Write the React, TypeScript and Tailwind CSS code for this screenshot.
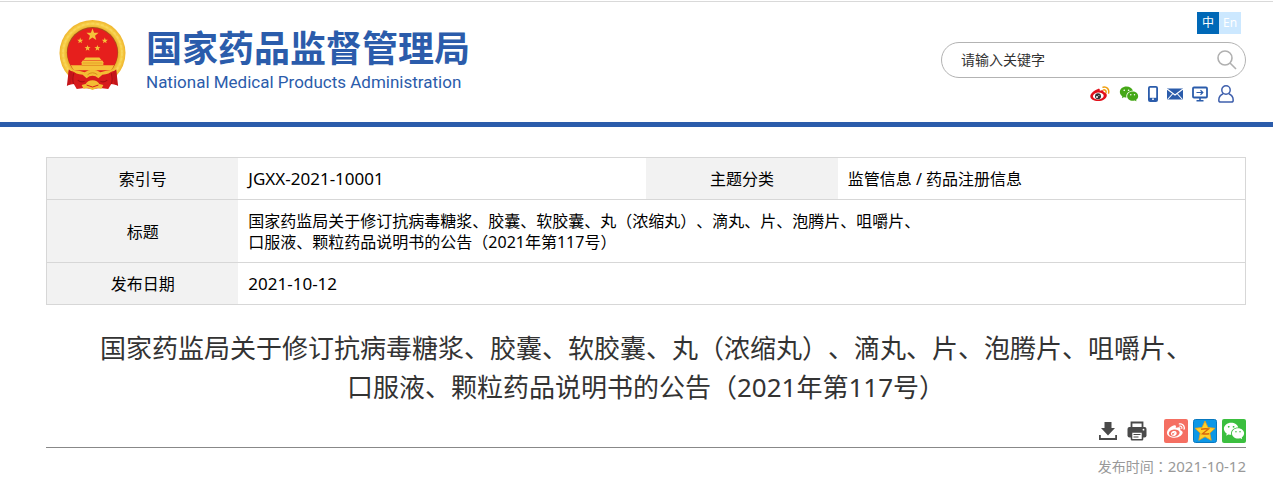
import { FormEvent, useState } from 'react'
import { FaWeibo } from 'react-icons/fa'
import { RiWechatFill } from 'react-icons/ri'

const TITLE_LINES = [
  '国家药监局关于修订抗病毒糖浆、胶囊、软胶囊、丸（浓缩丸）、滴丸、片、泡腾片、咀嚼片、',
  '口服液、颗粒药品说明书的公告（2021年第117号）',
]

const STAR = 'M0,-1 .245,-.337 .951,-.309 .396,.129 .588,.809 0,.416 -.588,.809 -.396,.129 -.951,-.309 -.245,-.337Z'

function Emblem() {
  return (
    <svg width="67" height="71" viewBox="0 0 68 72" aria-hidden="true">
      <defs>
        <radialGradient id="gold" cx="50%" cy="50%" r="50%">
          <stop offset="74%" stopColor="#e5a422" />
          <stop offset="88%" stopColor="#f9d34c" />
          <stop offset="100%" stopColor="#efb52e" />
        </radialGradient>
      </defs>
      <circle cx="34" cy="33.500" r="33.500" fill="url(#gold)" />
      <circle cx="34" cy="33.500" r="30" fill="none" stroke="#f9dc6a" strokeWidth="2" strokeDasharray="3 2" opacity=".5" />
      <circle cx="34" cy="33" r="26" fill="#a8501a" />
      <circle cx="34" cy="33.600" r="25.400" fill="#e61f1d" />
      <g fill="#f5c23a">
        <path d={STAR} transform="translate(34 15) scale(6.500)" />
        <path d={STAR} transform="translate(21.500 21) scale(3.200)" />
        <path d={STAR} transform="translate(46.500 21) scale(3.200)" />
        <path d={STAR} transform="translate(29 28.500) scale(3.200)" />
        <path d={STAR} transform="translate(39 28.500) scale(3.200)" />
        <path d="M27 38h14l2 2.500H25z" />
        <path d="M24 41h20l1.500 2.500H45V46H23v-2.500h-.5z" />
        <path d="M12 46h44l-3 5H15z" />
      </g>
      <path d="M24 43.600h20M23 46h22" stroke="#d98a1b" strokeWidth=".6" />
      <path d="M10 51q24 8 48 0l1 15-6-1-3 5-8-1-8 1-8-1-8 1-3-5-6 1z" fill="#d71a1b" />
      <path d="M10 50l4 4-2 11-4 2zM58 50l-4 4 2 11 4 2z" fill="#c4141a" />
      <path d="M15 54q-2 7 0 11M53 54q2 7 0 11M19 61q4 3 7 1M49 61q-4 3-7 1" stroke="#a90f14" fill="none" strokeWidth="1.200" />
      <path d="M13 50.500q8 1 13 2.500 8-5 16 0 5-1.500 13-2.500-4 5-11 5l-4 3.500q-6-5-12 0L24 55.500q-7 0-11-5z" fill="#f3bd34" />
      <path d="M29 55.500q5-4 10 0" fill="none" stroke="#d98a1b" />
      <path d="M34 61q5 0 7 4l4 1-2 4-4-1-5 2-5-2-4 1-2-4 4-1q2-4 7-4z" fill="#f3bd34" />
      <path d="M28 66l6 2 6-2" stroke="#d71a1b" fill="none" />
    </svg>
  )
}

function WeiboColor() {
  return (
    <svg width="20" height="16" viewBox="0 0 20 16" aria-hidden="true">
      <path d="M7.500 3.200c1.600-.8 2.600-.2 2.300 1.500 2-.9 4-.7 3.800 1.400 2 .5 3.400 1.600 3.200 3.600-.3 3-4.300 5.300-8.500 5.300C3.700 15 .3 13 .3 10.200.3 7.700 4 4.400 7.500 3.200z" fill="#e2101a" />
      <ellipse cx="8.300" cy="10" rx="5.400" ry="3.500" fill="#fff" transform="rotate(-6 8.300 10)" />
      <circle cx="8" cy="10.200" r="3" fill="#333" />
      <circle cx="7" cy="11" r="1" fill="#fff" />
      <circle cx="8.900" cy="9.600" r=".5" fill="#fff" />
      <path d="M13 1.200c3.800-.8 6.500 2 5.600 5.900M13.400 3.900c1.900-.3 3 .9 2.600 2.700" fill="none" stroke="#f0a011" strokeWidth="1.500" strokeLinecap="round" />
    </svg>
  )
}

function PhoneIcon() {
  return (
    <svg width="10" height="16" viewBox="0 0 10 16" aria-hidden="true">
      <rect x=".9" y=".9" width="8.200" height="14.200" rx="1.200" fill="#fff" stroke="#2b5cab" strokeWidth="1.800" />
      <path d="M1 11.800h8V15H1z" fill="#2b5cab" />
      <circle cx="5" cy="13.200" r=".9" fill="#fff" />
    </svg>
  )
}

function MailIcon() {
  return (
    <svg width="16" height="12" viewBox="0 0 16 12" aria-hidden="true">
      <rect y=".5" width="16" height="11" fill="#2b5cab" />
      <path d="M0 1l8 6 8-6M.5 11.500l5-5.500M15.500 11.500l-5-5.500" fill="none" stroke="#fff" strokeWidth="1.100" />
    </svg>
  )
}

function MonitorIcon() {
  return (
    <svg width="16" height="16" viewBox="0 0 16 16" fill="none" stroke="#2b5cab" aria-hidden="true">
      <rect x="1" y="1.500" width="14" height="10" rx="1" strokeWidth="1.800" />
      <path d="M4.500 6.500h6M8.500 4.300l2.300 2.200-2.300 2.200" strokeWidth="1.200" />
      <path d="M8 12v2M4.500 14.700h7" strokeWidth="1.600" />
    </svg>
  )
}

function UserIcon() {
  return (
    <svg width="17" height="18" viewBox="1 0 17 18" fill="none" stroke="#3f60ad" strokeWidth="1.500" aria-hidden="true">
      <circle cx="10" cy="5" r="4.200" />
      <path d="M7.200 8.800C4.200 10 2.800 12.500 2.800 15.200q0 1.900 1.800 1.900h10.800q1.800 0 1.800-1.900c0-2.700-1.400-5.200-4.400-6.400" />
    </svg>
  )
}

function DownloadIcon() {
  return (
    <svg width="18" height="18" viewBox="0 0 18 18" fill="#4a4a4a" aria-hidden="true">
      <path d="M5.500 0h7v6H16l-7 7.500L2 6h3.500z" />
      <path d="M0 13h1.800v3h14.400v-3H18v5H0z" />
    </svg>
  )
}

function PrintIcon() {
  return (
    <svg width="20" height="20" viewBox="0 0 20 20" aria-hidden="true">
      <path d="M4.500 7V1.500h11V7" fill="#fff" stroke="#4a4a4a" strokeWidth="1.800" />
      <rect x=".5" y="6" width="19" height="10.500" rx="2" fill="#4a4a4a" />
      <rect x="4.500" y="11" width="11" height="7.800" rx=".5" fill="#fff" stroke="#4a4a4a" strokeWidth="1.600" />
      <path d="M6.500 13.500h7M6.500 16h5" stroke="#4a4a4a" strokeWidth="1.200" />
      <circle cx="16.500" cy="8.700" r=".9" fill="#fff" />
    </svg>
  )
}

function QzoneIcon() {
  return (
    <svg width="24" height="24" viewBox="0 0 24 24" aria-hidden="true">
      <rect x=".5" y=".5" width="23" height="23" rx="2" fill="#0c97e6" stroke="#0878bf" />
      <path
        d="M12 2l3 6.500 7 .8-5.200 4.800 1.400 7.200L12 17.800l-6.200 3.500 1.400-7.200L2 9.300l7-.8z"
        fill="#ffd02a"
        stroke="#f0a015"
        strokeWidth=".8"
        strokeLinejoin="round"
      />
      <path d="M8 10.200q4-.9 7.500-.2l-6 4.800q3 .5 6.500-.1" fill="none" stroke="#d9660b" strokeWidth="1.400" />
    </svg>
  )
}

export default function App() {
  const [keyword, setKeyword] = useState('')
  const labelCell = 'w-[16%] bg-[#f2f2f2] px-2 pt-[11px] pb-[9px] text-center font-normal'
  const textCell = 'px-[10px] pt-[11px] pb-[9px]'
  const codeCell = 'px-[10px] py-[10px] text-[17px]'

  const handleSearch = (e: FormEvent) => {
    e.preventDefault()
  }

  return (
    <div className="min-h-screen bg-white pt-px font-['Noto_Sans','Noto_Sans_CJK_SC',sans-serif] text-black [text-spacing-trim:space-all]">
      {/* Header */}
      <header className="border-t border-b-5 border-t-[#d9d9d9] border-b-[#2b5cab] pr-[27px] pl-[46px]">
        <div className="flex h-[120px] items-start justify-between">
          <a href="#" className="mt-[18px] ml-[13px] flex items-start gap-5 text-[#2b5cab]">
            <Emblem />
            <span className="mt-[6px] block">
              <span className="block font-['Noto_Sans_CJK_SC',sans-serif] text-[36px] leading-10 font-bold whitespace-nowrap">
                国家药品监督管理局
              </span>
              <span className="mt-[6px] block font-[Roboto,sans-serif] text-[17px] leading-5 whitespace-nowrap">
                National Medical Products Administration
              </span>
            </span>
          </a>

          <div className="mt-[10px] w-[305px]">
            <div className="mr-[5px] flex justify-end text-xs leading-[22px] text-white">
              <a href="#" className="w-[22px] bg-[#0068b7] text-center">中</a>
              <a href="#" className="w-[22px] bg-[#cce8ff] text-center">En</a>
            </div>
            <form
              onSubmit={handleSearch}
              className="mt-2 flex h-9 items-center rounded-full border border-[#b3b3b3] pr-2 pl-[19px]"
            >
              <input
                type="text"
                aria-label="请输入关键字"
                value={keyword}
                onChange={(e) => setKeyword(e.target.value)}
                placeholder="请输入关键字"
                className="min-w-0 flex-1 text-sm outline-none placeholder:text-[#333]"
              />
              <button type="submit" aria-label="搜索">
                <svg width="20" height="20" viewBox="0 0 20 20" fill="none" stroke="#b0b0b0" strokeWidth="1.600">
                  <circle cx="8" cy="8" r="7" />
                  <path d="M13 13l6 6" />
                </svg>
              </button>
            </form>
            <div className="mt-[7px] flex h-[18px] items-center justify-end gap-[9px] pr-3">
              <a href="#" aria-label="微博"><WeiboColor /></a>
              <a href="#" aria-label="微信"><RiWechatFill size={20} color="#45a817" /></a>
              <a href="#" aria-label="手机版"><PhoneIcon /></a>
              <a href="#" aria-label="邮箱"><MailIcon /></a>
              <a href="#" aria-label="客户端"><MonitorIcon /></a>
              <a href="#" aria-label="个人中心"><UserIcon /></a>
            </div>
          </div>
        </div>
      </header>

      <main className="pt-[30px] pr-[27px] pl-[46px]">
        {/* Document info */}
        <table className="w-full table-fixed border-collapse border border-[#d7d7d7] text-base leading-[21px]">
          <tbody>
            <tr className="border-b border-[#d7d7d7]">
              <th scope="row" className={labelCell}>索引号</th>
              <td className={`${codeCell} w-[34%]`}>JGXX-2021-10001</td>
              <th scope="row" className={labelCell}>主题分类</th>
              <td className={`${textCell} w-[34%]`}>监管信息 / 药品注册信息</td>
            </tr>
            <tr className="border-b border-[#d7d7d7]">
              <th scope="row" className={labelCell}>标题</th>
              <td colSpan={3} className={textCell}>
                {TITLE_LINES.map((line) => (
                  <p key={line}>{line}</p>
                ))}
              </td>
            </tr>
            <tr>
              <th scope="row" className={labelCell}>发布日期</th>
              <td colSpan={3} className={codeCell}>2021-10-12</td>
            </tr>
          </tbody>
        </table>

        {/* Article heading */}
        <h1 className="mt-6 text-center text-[26px] leading-[39px] text-[#333]">
          {TITLE_LINES.map((line) => (
            <span key={line} className="block">{line}</span>
          ))}
        </h1>

        <div className="mt-3 flex items-center justify-end border-b border-[#888] pb-1">
          <button type="button" aria-label="下载" className="mr-[10px]"><DownloadIcon /></button>
          <button type="button" aria-label="打印" className="mr-[17px]"><PrintIcon /></button>
          <div className="flex gap-[5px]">
            <a href="#" aria-label="分享到微博" className="flex size-6 items-center justify-center rounded-xs bg-[#f56f62]">
              <FaWeibo size={18} color="#fff" />
            </a>
            <a href="#" aria-label="分享到QQ空间"><QzoneIcon /></a>
            <a href="#" aria-label="分享到微信" className="flex size-6 items-center justify-center rounded-xs bg-[#3bbf3f]">
              <RiWechatFill size={22} color="#fff" />
            </a>
          </div>
        </div>
        <p className="mt-[7px] text-right text-sm leading-[22px] text-[#999]">
          发布时间<span className="font-['Noto_Sans_CJK_TC',sans-serif]">：</span>
          <time dateTime="2021-10-12" className="text-[15px]">2021-10-12</time>
        </p>
      </main>
    </div>
  )
}
